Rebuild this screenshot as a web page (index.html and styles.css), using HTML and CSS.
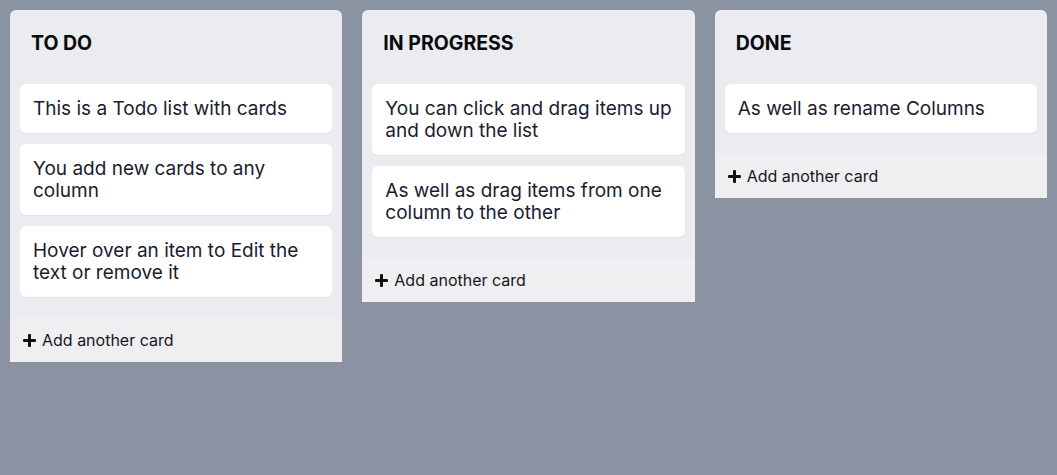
FILE: index.html
```html
<!DOCTYPE html>
<html>
<head>
<meta charset="utf-8">
<link rel="stylesheet" href="styles.css">
</head>
<body>
<div class="board">
  <section class="column">
    <h2 class="column-title">TO DO</h2>
    <div class="card-list">
      <div class="card">This is a Todo list with cards</div>
      <div class="card">You add new cards to any column</div>
      <div class="card">Hover over an item to Edit the text or remove it</div>
    </div>
    <div class="add-card"><span class="plus"></span>Add another card</div>
  </section>
  <section class="column">
    <h2 class="column-title">IN PROGRESS</h2>
    <div class="card-list">
      <div class="card">You can click and drag items up and down the list</div>
      <div class="card">As well as drag items from one column to the other</div>
    </div>
    <div class="add-card"><span class="plus"></span>Add another card</div>
  </section>
  <section class="column">
    <h2 class="column-title">DONE</h2>
    <div class="card-list">
      <div class="card">As well as rename Columns</div>
    </div>
    <div class="add-card"><span class="plus"></span>Add another card</div>
  </section>
</div>
</body>
</html>
```

FILE: styles.css
```css
html, body {
  margin: 0;
  height: 100%;
}
body {
  background: #8b93a3;
  font-family: "Inter", "Roboto", "Noto Sans", sans-serif;
  color: #1a1c30;
}
.board {
  display: grid;
  grid-template-columns: repeat(3, 1fr);
  gap: 20px;
  padding: 10px;
  align-items: start;
}
.column {
  background: #ebecf0;
  border-radius: 6px 6px 0 0;
  overflow: hidden;
}
.column-title {
  margin: 0;
  padding: 21px 21px 19px;
  font-size: 19.5px;
  line-height: 24px;
  font-weight: 700;
  color: #0b0b0f;
}
.card-list {
  display: flex;
  flex-direction: column;
  gap: 11px;
  padding: 10px 10px 21px;
}
.card {
  background: #ffffff;
  border-radius: 6px;
  padding: 14px 13px 13px;
  font-size: 19px;
  line-height: 22px;
  box-shadow: 0 1px 0 rgba(9, 30, 66, 0.06);
}
.add-card {
  background: #efeff1;
  height: 44px;
  display: flex;
  align-items: center;
  padding-left: 13px;
  font-size: 16px;
  color: #16161e;
}
.plus {
  position: relative;
  width: 13px;
  height: 13px;
  margin-right: 6px;
  flex: none;
}
.plus::before, .plus::after {
  content: "";
  position: absolute;
  background: #111;
  border-radius: 1px;
}
.plus::before {
  left: 0;
  right: 0;
  top: 5px;
  height: 3px;
}
.plus::after {
  top: 0;
  bottom: 0;
  left: 5px;
  width: 3px;
}
```
